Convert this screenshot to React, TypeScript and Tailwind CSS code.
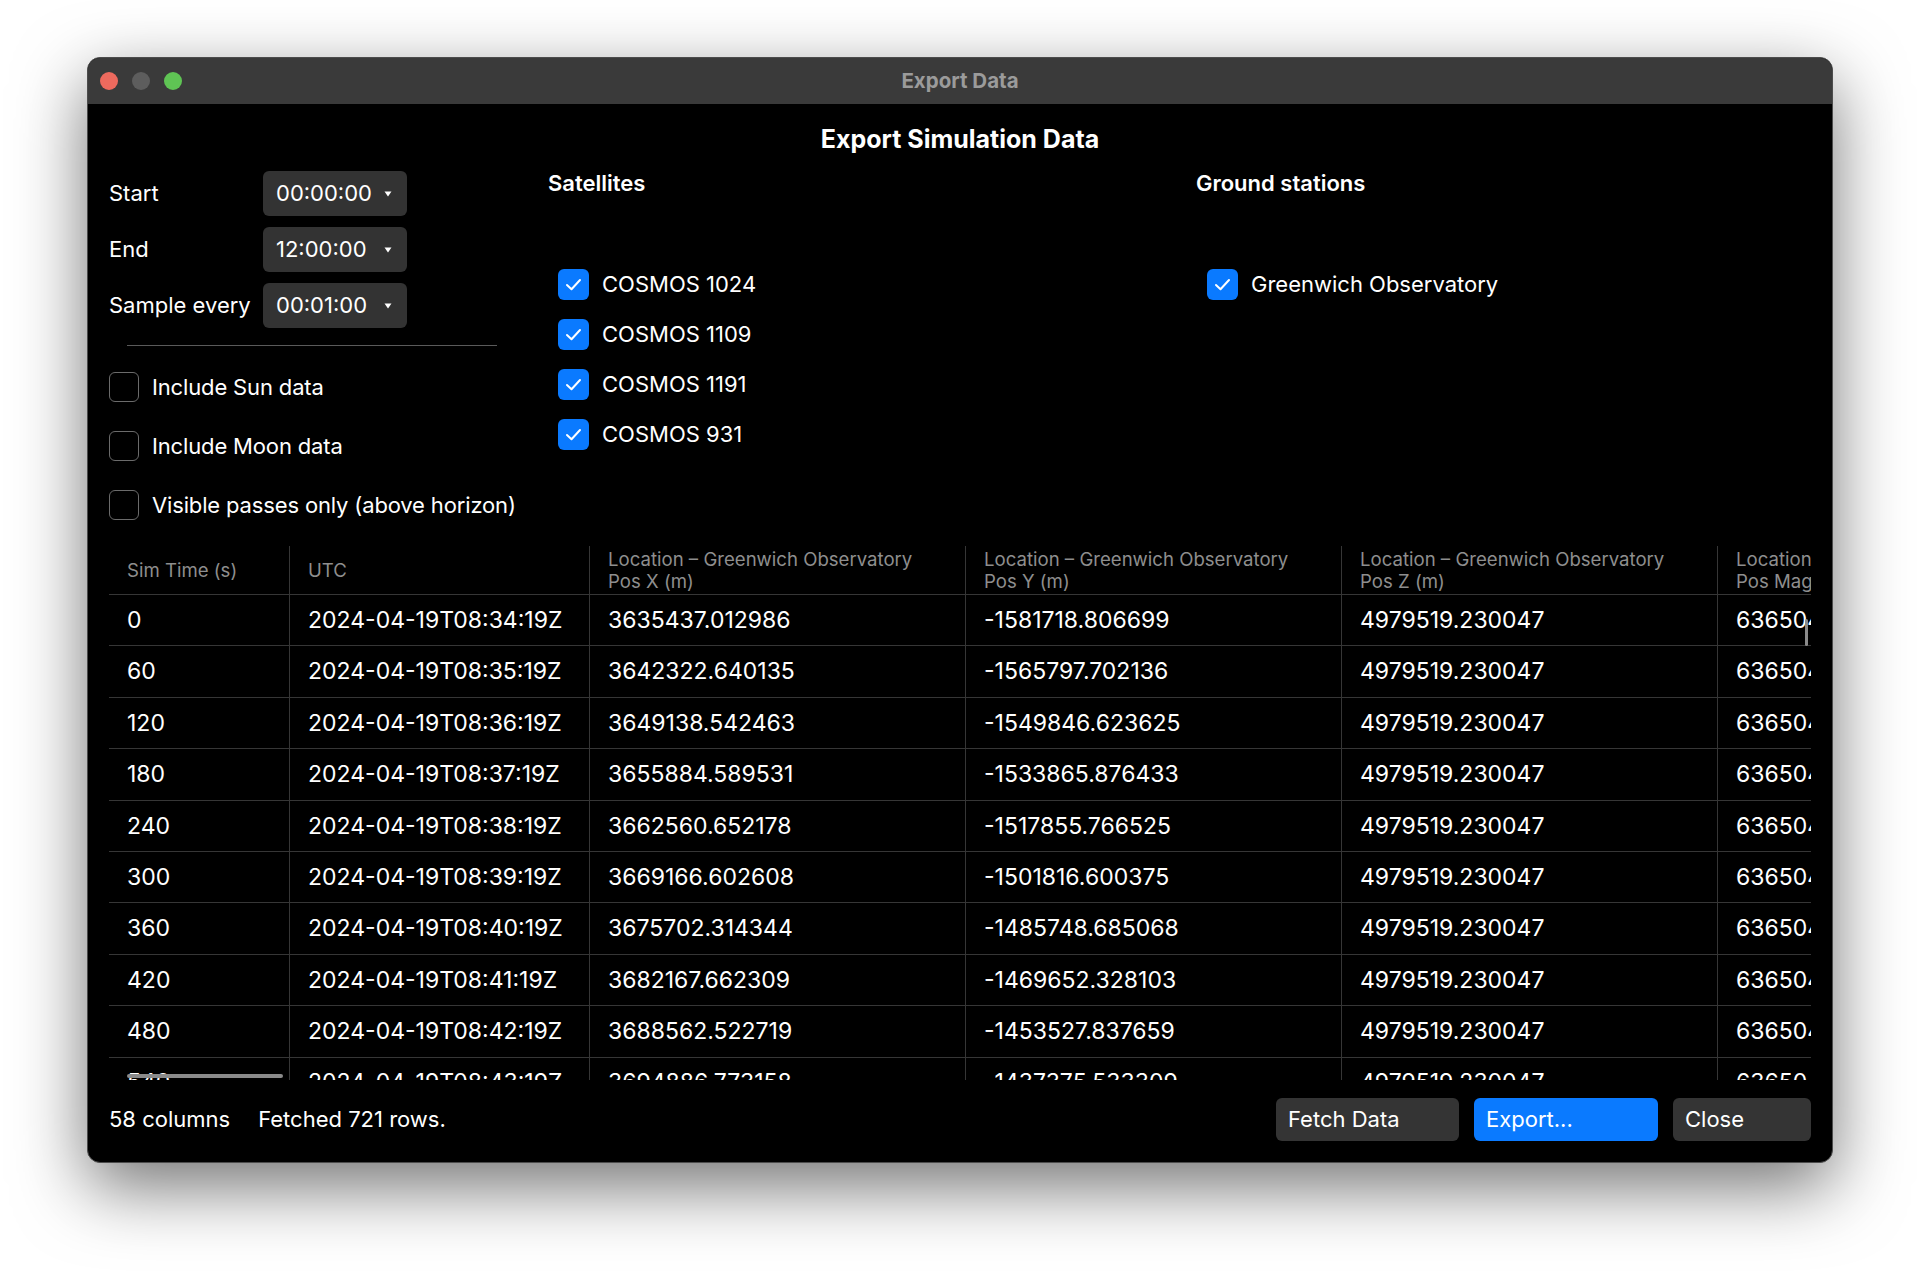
const ROWS = [
  ['0', '2024-04-19T08:34:19Z', '3635437.012986', '-1581718.806699', '4979519.230047', '6365041.281536'],
  ['60', '2024-04-19T08:35:19Z', '3642322.640135', '-1565797.702136', '4979519.230047', '6365041.281536'],
  ['120', '2024-04-19T08:36:19Z', '3649138.542463', '-1549846.623625', '4979519.230047', '6365041.281536'],
  ['180', '2024-04-19T08:37:19Z', '3655884.589531', '-1533865.876433', '4979519.230047', '6365041.281536'],
  ['240', '2024-04-19T08:38:19Z', '3662560.652178', '-1517855.766525', '4979519.230047', '6365041.281536'],
  ['300', '2024-04-19T08:39:19Z', '3669166.602608', '-1501816.600375', '4979519.230047', '6365041.281536'],
  ['360', '2024-04-19T08:40:19Z', '3675702.314344', '-1485748.685068', '4979519.230047', '6365041.281536'],
  ['420', '2024-04-19T08:41:19Z', '3682167.662309', '-1469652.328103', '4979519.230047', '6365041.281536'],
  ['480', '2024-04-19T08:42:19Z', '3688562.522719', '-1453527.837659', '4979519.230047', '6365041.281536'],
  ['540', '2024-04-19T08:43:19Z', '3694886.773158', '-1437375.533309', '4979519.230047', '6365041.281536'],
];

const HEADERS = [
  ['Sim Time (s)'],
  ['UTC'],
  ['Location – Greenwich Observatory', 'Pos X (m)'],
  ['Location – Greenwich Observatory', 'Pos Y (m)'],
  ['Location – Greenwich Observatory', 'Pos Z (m)'],
  ['Location – Greenwich Observatory', 'Pos Mag (m)'],
];

const COL_WIDTHS = ['w-[180px]', 'w-[300px]', 'w-[376px]', 'w-[376px]', 'w-[376px]', 'w-[376px]'];

const SATELLITES = ['COSMOS 1024', 'COSMOS 1109', 'COSMOS 1191', 'COSMOS 931'];

const TIMES = [
  ['Start', '00:00:00'],
  ['End', '12:00:00'],
  ['Sample every', '00:01:00'],
];

const OPTIONS = ['Include Sun data', 'Include Moon data', 'Visible passes only (above horizon)'];

const Check = ({ checked }: { checked: boolean }) =>
  checked ? (
    <span className="flex items-center justify-center w-[31px] h-[31px] rounded-[6px] bg-[#0a7aff] shrink-0">
      <svg width="17" height="13" viewBox="0 0 17 13" fill="none">
        <path d="M2 7 L6.5 11.2 L15 2" stroke="white" strokeWidth="2" strokeLinecap="round" strokeLinejoin="round" />
      </svg>
    </span>
  ) : (
    <span className="w-[30px] h-[30px] rounded-[6px] border-[1.5px] border-[#6b6b6b] shrink-0" />
  );

const Dropdown = ({ value }: { value: string }) => (
  <div className="flex items-center justify-between w-[144px] h-[45px] rounded-[6px] bg-[#333333] pl-[13px] pr-[15px]">
    <span>{value}</span>
    <svg width="8" height="6" viewBox="0 0 8 6">
      <path d="M0.5 0.5 H7.5 L4 5.5 Z" fill="white" />
    </svg>
  </div>
);

const App = () => {
  return (
    <div className="min-h-[1278px] w-[1920px] bg-white pl-[87px] pt-[57px] font-['Inter','Noto_Sans',sans-serif] text-[22px] text-white">
      <div className="flex flex-col w-[1746px] h-[1106px] rounded-[13px] overflow-hidden border border-[#4c4c4c] bg-black shadow-[0_24px_70px_rgba(0,0,0,0.55)]">
        {/* title bar */}
        <div className="relative flex items-center h-[46px] bg-[#3a3a3a] pl-[12px] shrink-0">
          <div className="flex gap-[14px]">
            <span className="w-[18px] h-[18px] rounded-full bg-[#ed6a5e]" />
            <span className="w-[18px] h-[18px] rounded-full bg-[#5d5d5d]" />
            <span className="w-[18px] h-[18px] rounded-full bg-[#5fc454]" />
          </div>
          <span className="absolute inset-0 flex items-center justify-center text-[20.5px] font-bold text-[#9b9b9b]">
            Export Data
          </span>
        </div>

        <div className="flex flex-col flex-1 px-[21px]">
          <h1 className="pt-[18px] text-center text-[25px] font-bold leading-[34px]">Export Simulation Data</h1>

          {/* options */}
          <div className="flex h-[375px] mt-[15px]">
            <div className="flex flex-col w-[439px]">
              <div className="flex flex-col gap-[11px]">
                {TIMES.map(([label, value]) => (
                  <div key={label} className="flex items-center">
                    <span className="w-[154px]">{label}</span>
                    <Dropdown value={value} />
                  </div>
                ))}
              </div>
              <div className="ml-[18px] mt-[17px] w-[370px] h-px bg-[#5a5a5a]" />
              <div className="flex flex-col gap-[29px] mt-[26px] tracking-[-0.15px]">
                {OPTIONS.map((o) => (
                  <label key={o} className="flex items-center gap-[13px] h-[30px]">
                    <Check checked={false} />
                    <span>{o}</span>
                  </label>
                ))}
              </div>
            </div>

            <div className="flex flex-col w-[648px]">
              <h2 className="font-semibold leading-[28px] mt-[-2px]">Satellites</h2>
              <div className="flex flex-col gap-[19px] mt-[72px] pl-[10px]">
                {SATELLITES.map((s) => (
                  <label key={s} className="flex items-center gap-[13px] h-[31px]">
                    <Check checked />
                    <span>{s}</span>
                  </label>
                ))}
              </div>
            </div>

            <div className="flex flex-col">
              <h2 className="font-semibold leading-[28px] mt-[-2px]">Ground stations</h2>
              <div className="flex flex-col mt-[72px] pl-[11px]">
                <label className="flex items-center gap-[13px] h-[31px]">
                  <Check checked />
                  <span>Greenwich Observatory</span>
                </label>
              </div>
            </div>
          </div>

          {/* table */}
          <div className="relative h-[534px] overflow-hidden">
            <div className="w-max">
              <div className="flex h-[49px] border-b border-[#363636] text-[18.6px] leading-[22px] text-[#8e8e8e]">
                {HEADERS.map((h, i) => (
                  <div
                    key={i}
                    className={`${COL_WIDTHS[i]} flex flex-col justify-center pl-[18px] ${i > 0 ? 'border-l border-[#363636]' : ''}`}
                  >
                    {h.map((line) => (
                      <span key={line} className="whitespace-nowrap">
                        {line}
                      </span>
                    ))}
                  </div>
                ))}
              </div>
              {ROWS.map((row) => (
                <div key={row[0]} className="flex h-[51.4px] border-b border-[#363636] text-[23px]">
                  {row.map((cell, i) => (
                    <div
                      key={i}
                      className={`${COL_WIDTHS[i]} flex items-center pl-[18px] whitespace-nowrap ${i > 0 ? 'border-l border-[#363636]' : ''}`}
                    >
                      {cell}
                    </div>
                  ))}
                </div>
              ))}
            </div>
            <div className="absolute top-0 bottom-0 left-[1704px] w-[400px] bg-black" />
            <div className="absolute right-[3px] top-[73px] w-[3px] h-[27px] rounded-full bg-[#8a8a8a]" />
            <div className="absolute left-[18px] bottom-[2px] w-[156px] h-[4px] rounded-full bg-[#8a8a8a]" />
          </div>

          {/* footer */}
          <div className="flex items-start pt-[18px]">
            <div className="flex items-center gap-[28px] h-[43px]">
              <span>58 columns</span>
              <span>Fetched 721 rows.</span>
            </div>
            <div className="ml-auto flex gap-[15px]">
              <button className="w-[183px] h-[43px] rounded-[6px] bg-[#343434] pl-[12px] text-left">Fetch Data</button>
              <button className="w-[184px] h-[43px] rounded-[6px] bg-[#0a7aff] pl-[12px] text-left">Export...</button>
              <button className="w-[138px] h-[43px] rounded-[6px] bg-[#343434] pl-[12px] text-left">Close</button>
            </div>
          </div>
        </div>
      </div>
    </div>
  );
};

export default App;
